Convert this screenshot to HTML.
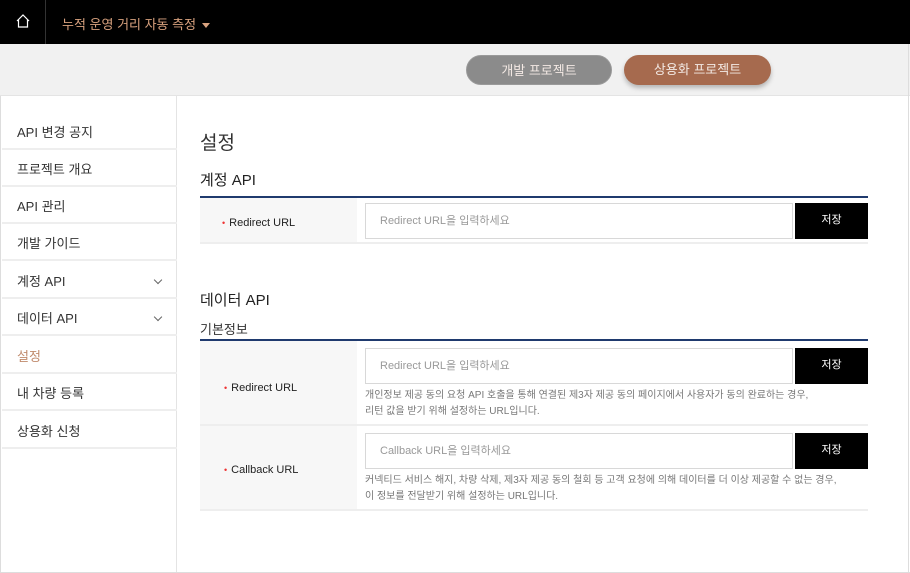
<!DOCTYPE html>
<html><head><meta charset="utf-8"><style>
*{margin:0;padding:0;box-sizing:border-box}
body{width:910px;height:573px;overflow:hidden;background:#fff;font-family:"Liberation Sans","Noto Sans CJK KR",sans-serif;color:#333;position:relative}
.abs{position:absolute}
.hdr{left:0;top:0;width:910px;height:44px;background:#000}
.gbar{left:0;top:44px;width:910px;height:52px;background:#f1f1f1;border-bottom:1px solid #e4e4e4}
.btn{top:55px;height:30px;border-radius:15px;color:#f3e9e4;font-size:13px;text-align:center;line-height:30px}
.side{left:0;top:96px;width:177px;height:477px;border-right:1px solid #e4e4e4;border-left:1px solid #ddd}
.item{position:absolute;left:1px;width:175px;height:37px;border-bottom:2px solid #eee;font-size:13px;line-height:40px;padding-left:15px;color:#333}
.chev{position:absolute;right:16px;top:15px;width:6px;height:6px;border-right:1px solid #666;border-bottom:1px solid #666;transform:rotate(45deg)}
.row{left:200px;width:668px;border-bottom:2px solid #eee}
.lab{position:absolute;left:0;top:0;width:157px;height:100%;background:#f7f7f7;font-size:11px;color:#222}
.lab span{color:#e33;margin-right:4px;font-size:9px}
.inp{position:absolute;left:165px;width:428px;height:36px;border:1px solid #d8d8d8;background:#fff;font-size:11px;color:#999;line-height:34px;padding-left:14px}
.sv{position:absolute;left:595px;width:73px;height:36px;background:#000;color:#fff;font-size:11px;text-align:center;line-height:34px}
.desc{position:absolute;left:165px;font-size:10px;color:#777;line-height:16px}
</style></head><body>
<div class="abs hdr"></div>
<div class="abs" style="left:45px;top:0;width:1px;height:44px;background:#333"></div>
<svg class="abs" style="left:15px;top:13px" width="16" height="16" viewBox="0 0 16 16"><path d="M2 8 L8 2 L14 8 M3.5 6.5 V14 H12.5 V6.5" fill="none" stroke="#fff" stroke-width="1.2"/></svg>
<div class="abs" style="left:62px;top:14px;font-size:13px;color:#d9a27f;white-space:nowrap">누적 운영 거리 자동 측정<span style="display:inline-block;margin-left:6px;vertical-align:middle;width:0;height:0;border-left:4px solid transparent;border-right:4px solid transparent;border-top:5px solid #d9a27f"></span></div>
<div class="abs gbar"></div>
<div class="abs btn" style="left:466px;width:146px;background:#8b8b8b;border:1px solid #9a9a9a">개발 프로젝트</div>
<div class="abs btn" style="left:624px;width:147px;background:#a66a4e;box-shadow:0 3px 5px rgba(0,0,0,.25)">상용화 프로젝트</div>
<div class="abs side">
<div class="item" style="top:17px">API 변경 공지</div>
<div class="item" style="top:54px">프로젝트 개요</div>
<div class="item" style="top:91px">API 관리</div>
<div class="item" style="top:128px">개발 가이드</div>
<div class="item" style="top:166px">계정 API<i class="chev"></i></div>
<div class="item" style="top:203px">데이터 API<i class="chev"></i></div>
<div class="item" style="top:241px;color:#c08a6c">설정</div>
<div class="item" style="top:278px">내 차량 등록</div>
<div class="item" style="top:316px">상용화 신청</div>
</div>
<div class="abs" style="left:200px;top:128px;font-size:19px;color:#333">설정</div>
<div class="abs" style="left:200px;top:169px;font-size:15px;color:#222">계정 API</div>
<div class="abs" style="left:200px;top:196px;width:668px;height:2px;background:#1f3a6e"></div>
<div class="abs row" style="top:198px;height:46px">
<div class="lab" style="padding:19px 0 0 22px"><span>•</span>Redirect URL</div>
<div class="inp" style="top:5px">Redirect URL을 입력하세요</div>
<div class="sv" style="top:5px">저장</div>
</div>
<div class="abs" style="left:200px;top:289px;font-size:15px;color:#222">데이터 API</div>
<div class="abs" style="left:200px;top:319px;font-size:13px;color:#333">기본정보</div>
<div class="abs" style="left:200px;top:339px;width:668px;height:2px;background:#1f3a6e"></div>
<div class="abs row" style="top:341px;height:85px">
<div class="lab" style="padding:41px 0 0 24px"><span>•</span>Redirect URL</div>
<div class="inp" style="top:7px">Redirect URL을 입력하세요</div>
<div class="sv" style="top:7px">저장</div>
<div class="desc" style="top:47px">개인정보 제공 동의 요청 API 호출을 통해 연결된 제3자 제공 동의 페이지에서 사용자가 동의 완료하는 경우,<br>리턴 값을 받기 위해 설정하는 URL입니다.</div>
</div>
<div class="abs row" style="top:426px;height:85px">
<div class="lab" style="padding:38px 0 0 24px"><span>•</span>Callback URL</div>
<div class="inp" style="top:7px">Callback URL을 입력하세요</div>
<div class="sv" style="top:7px">저장</div>
<div class="desc" style="top:47px">커넥티드 서비스 해지, 차량 삭제, 제3자 제공 동의 철회 등 고객 요청에 의해 데이터를 더 이상 제공할 수 없는 경우,<br>이 정보를 전달받기 위해 설정하는 URL입니다.</div>
</div>
<div class="abs" style="left:908px;top:44px;width:1px;height:529px;background:#ddd"></div>
<div class="abs" style="left:0;top:572px;width:910px;height:1px;background:#ddd"></div>
</body></html>
